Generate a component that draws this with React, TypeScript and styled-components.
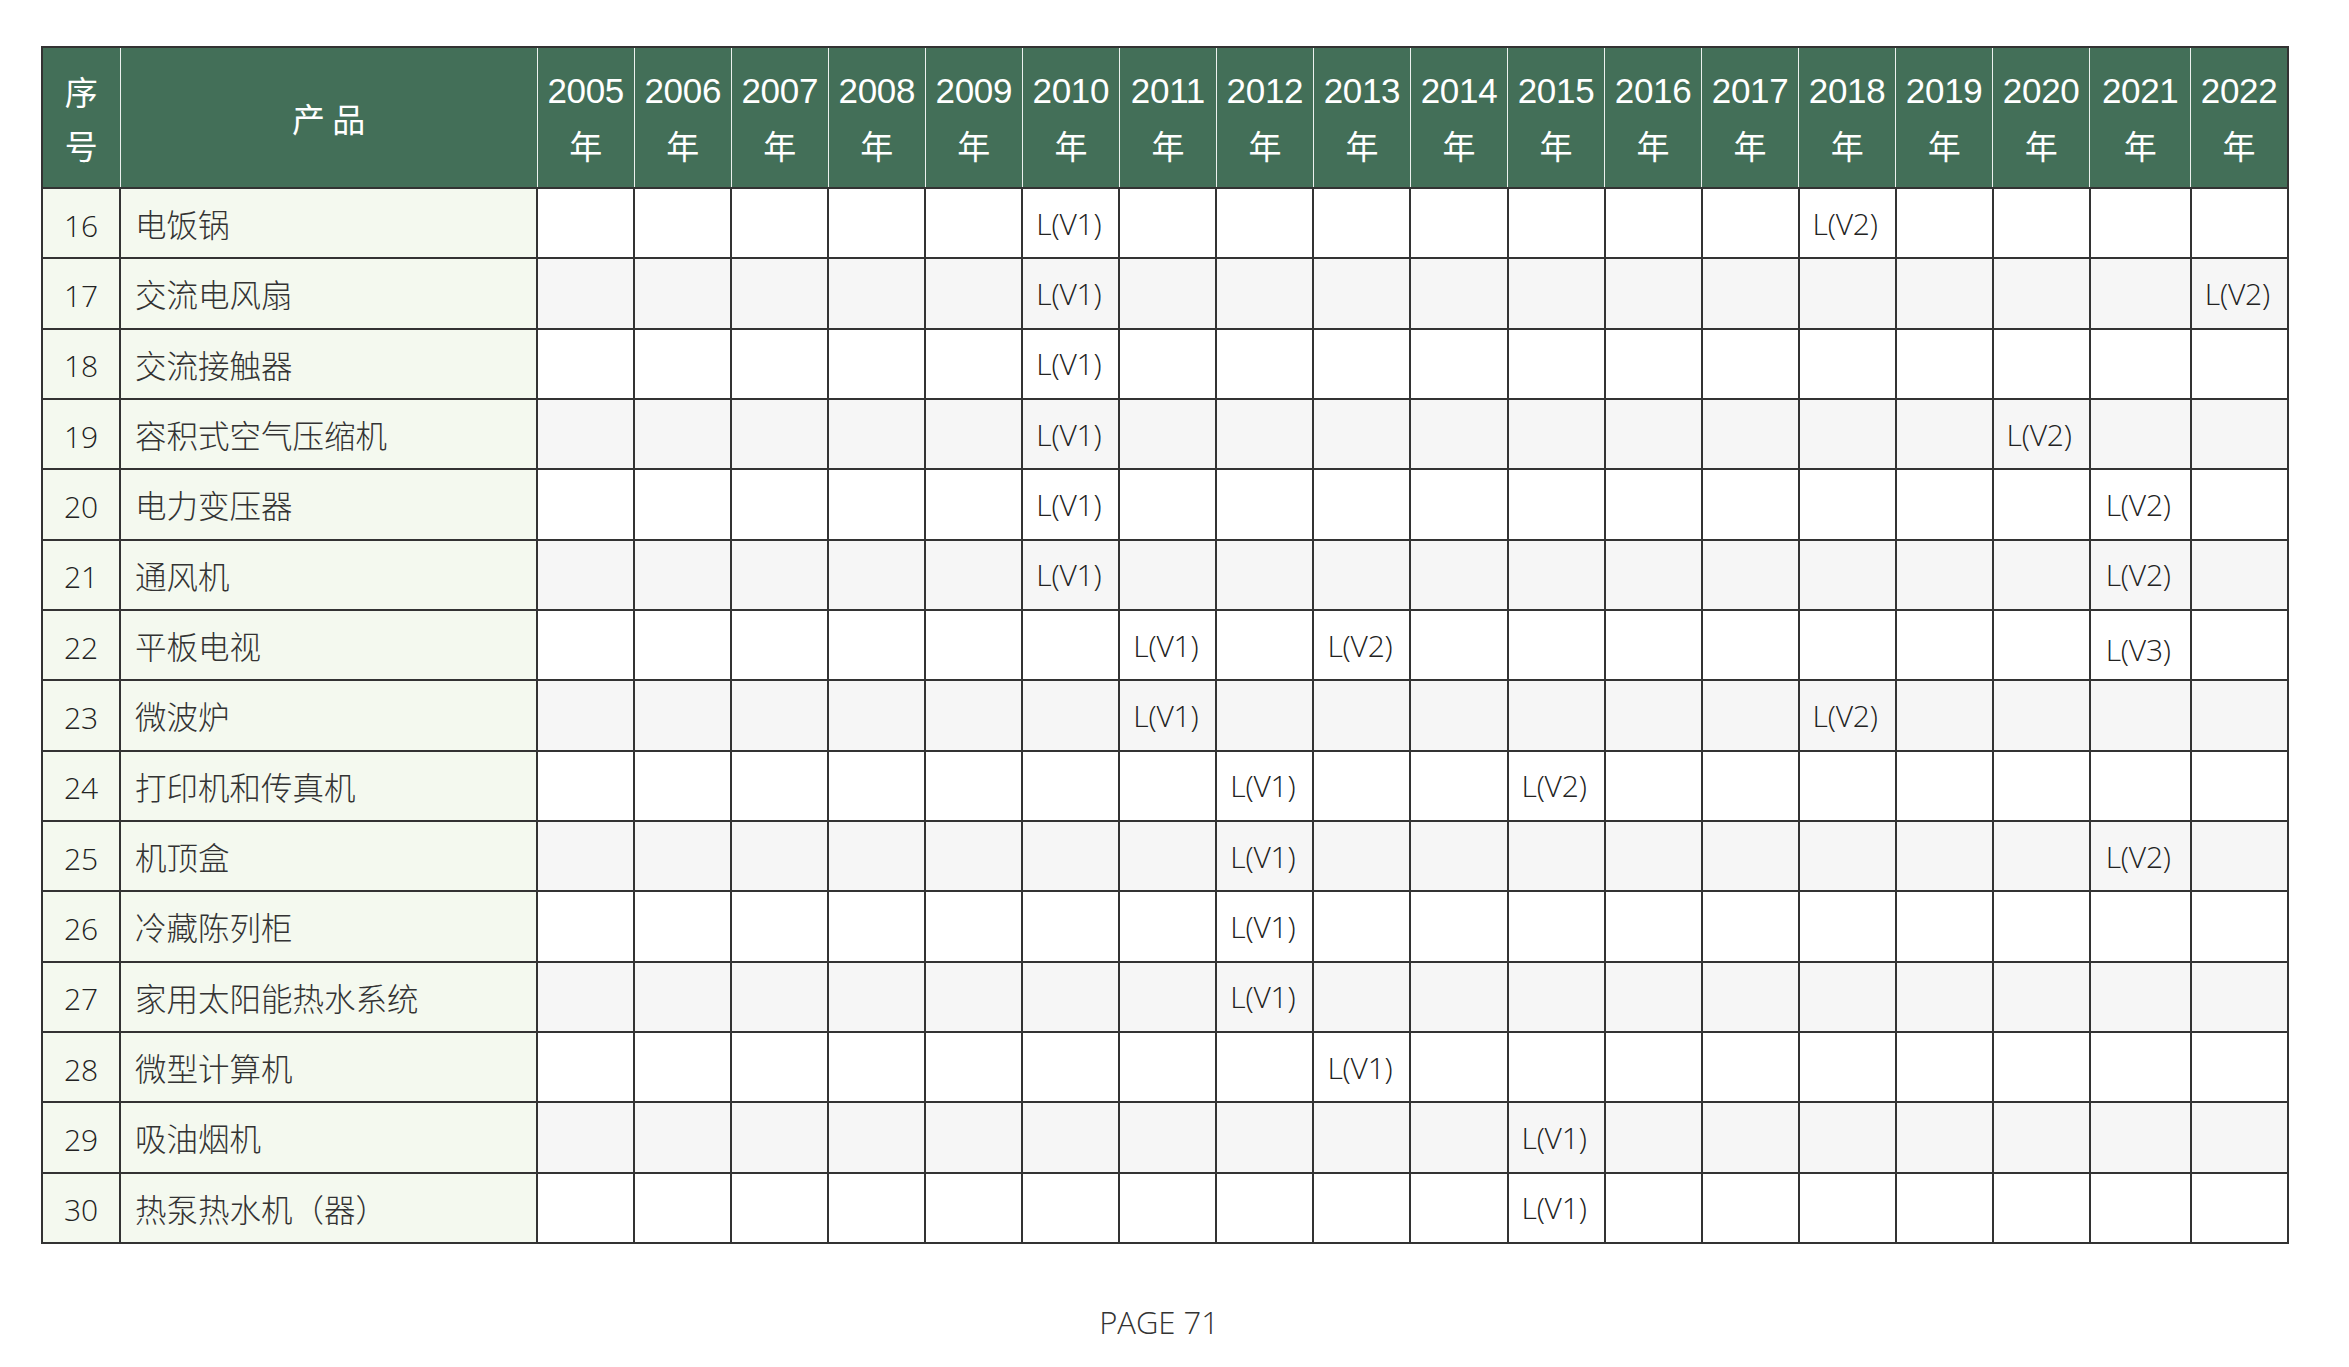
import React from "react";
import styled, { createGlobalStyle } from "styled-components";

const GlobalStyle = createGlobalStyle`
  html, body {
    margin: 0;
    padding: 0;
    background: #ffffff;
  }
`;

const YEARS = [
  2005, 2006, 2007, 2008, 2009, 2010, 2011, 2012, 2013, 2014, 2015, 2016,
  2017, 2018, 2019, 2020, 2021, 2022,
];

type Row = {
  no: number;
  name: string;
  marks: Record<number, string>;
};

const ROWS: Row[] = [
  { no: 16, name: "电饭锅", marks: { 2010: "L(V1)", 2018: "L(V2)" } },
  { no: 17, name: "交流电风扇", marks: { 2010: "L(V1)", 2022: "L(V2)" } },
  { no: 18, name: "交流接触器", marks: { 2010: "L(V1)" } },
  { no: 19, name: "容积式空气压缩机", marks: { 2010: "L(V1)", 2020: "L(V2)" } },
  { no: 20, name: "电力变压器", marks: { 2010: "L(V1)", 2021: "L(V2)" } },
  { no: 21, name: "通风机", marks: { 2010: "L(V1)", 2021: "L(V2)" } },
  {
    no: 22,
    name: "平板电视",
    marks: { 2011: "L(V1)", 2013: "L(V2)", 2021: "L(V3)" },
  },
  { no: 23, name: "微波炉", marks: { 2011: "L(V1)", 2018: "L(V2)" } },
  { no: 24, name: "打印机和传真机", marks: { 2012: "L(V1)", 2015: "L(V2)" } },
  { no: 25, name: "机顶盒", marks: { 2012: "L(V1)", 2021: "L(V2)" } },
  { no: 26, name: "冷藏陈列柜", marks: { 2012: "L(V1)" } },
  { no: 27, name: "家用太阳能热水系统", marks: { 2012: "L(V1)" } },
  { no: 28, name: "微型计算机", marks: { 2013: "L(V1)" } },
  { no: 29, name: "吸油烟机", marks: { 2015: "L(V1)" } },
  { no: 30, name: "热泵热水机（器）", marks: { 2015: "L(V1)" } },
];

const App = () => {
  return (
    <>
      <GlobalStyle />
      <Page>
        <Table>
          <colgroup>
            <col style={{ width: 78 }} />
            <col style={{ width: 417 }} />
            {YEARS.map((y) => (
              <col key={y} style={{ width: y === 2021 ? 101 : 97 }} />
            ))}
          </colgroup>
          <thead>
            <HeadRow>
              <HeadCell>
                <HeadLine>序</HeadLine>
                <HeadLine>号</HeadLine>
              </HeadCell>
              <HeadCell>
                <HeadLine>产&nbsp;品</HeadLine>
              </HeadCell>
              {YEARS.map((y) => (
                <HeadCell key={y}>
                  <YearLine>{y}</YearLine>
                  <HeadLine>年</HeadLine>
                </HeadCell>
              ))}
            </HeadRow>
          </thead>
          <tbody>
            {ROWS.map((r, i) => (
              <BodyRow key={r.no}>
                <NoCell>{r.no}</NoCell>
                <NameCell>{r.name}</NameCell>
                {YEARS.map((y) => (
                  <YearCell key={y} $shaded={i % 2 === 1}>
                    {r.marks[y] && (
                      <Mark $low={r.marks[y] === "L(V3)"}>{r.marks[y]}</Mark>
                    )}
                  </YearCell>
                ))}
              </BodyRow>
            ))}
          </tbody>
        </Table>
        <PageNo>PAGE 71</PageNo>
      </Page>
    </>
  );
};

export default App;

const Page = styled.div`
  width: 2349px;
  min-height: 1367px;
  box-sizing: border-box;
  padding: 46px 0 0 41px;
  font-family: "Open Sans", "Noto Sans CJK SC", sans-serif;
  font-weight: 300;
  color: #222222;
`;

const Table = styled.table`
  width: 2248px;
  table-layout: fixed;
  border-collapse: collapse;
`;

const HeadRow = styled.tr`
  height: 141px;
  background-color: #436f58;
`;

const HeadCell = styled.th`
  padding: 0;
  border: 1px solid rgba(255, 255, 255, 0.9);
  border-top: 2px solid #333333;
  border-bottom: 2px solid #333333;
  color: #ffffff;
  font-weight: 400;
  text-align: center;
  vertical-align: middle;

  &:first-child {
    border-left: 2px solid #333333;
  }
  &:last-child {
    border-right: 2px solid #333333;
  }
`;

const HeadLine = styled.div`
  font-family: "Noto Sans CJK SC", sans-serif;
  font-size: 33px;
  line-height: 54px;
`;

const YearLine = styled.div`
  font-family: "Liberation Sans", "Noto Sans CJK SC", sans-serif;
  font-size: 35px;
  line-height: 54px;
  letter-spacing: -0.3px;
`;

const BodyRow = styled.tr`
  height: 70.33px;
`;

const BaseCell = styled.td`
  padding: 0;
  border: 2px solid #333333;
  vertical-align: middle;
  font-size: 30px;
  white-space: nowrap;
`;

const NoCell = styled(BaseCell)`
  background-color: #f4f9ef;
  text-align: center;
  padding-top: 4px;
`;

const NameCell = styled(BaseCell)`
  background-color: #f4f9ef;
  padding-left: 14px;
  font-family: "Noto Sans CJK SC", sans-serif;
  font-size: 31.5px;
  color: #333333;
`;

const YearCell = styled(BaseCell)<{ $shaded: boolean }>`
  background-color: ${(p) => (p.$shaded ? "#f6f6f6" : "#ffffff")};
  text-align: center;
`;

const Mark = styled.span<{ $low: boolean }>`
  display: inline-block;
  font-size: 30px;
  letter-spacing: -0.2px;
  transform: translate(-2px, ${(p) => (p.$low ? "4px" : "0")});
`;

const PageNo = styled.div`
  width: 2248px;
  margin-top: 61px;
  text-align: center;
  font-family: "Open Sans", sans-serif;
  font-weight: 300;
  font-size: 31px;
  line-height: 34px;
  color: #333333;
  transform: translateX(-6px);
`;
